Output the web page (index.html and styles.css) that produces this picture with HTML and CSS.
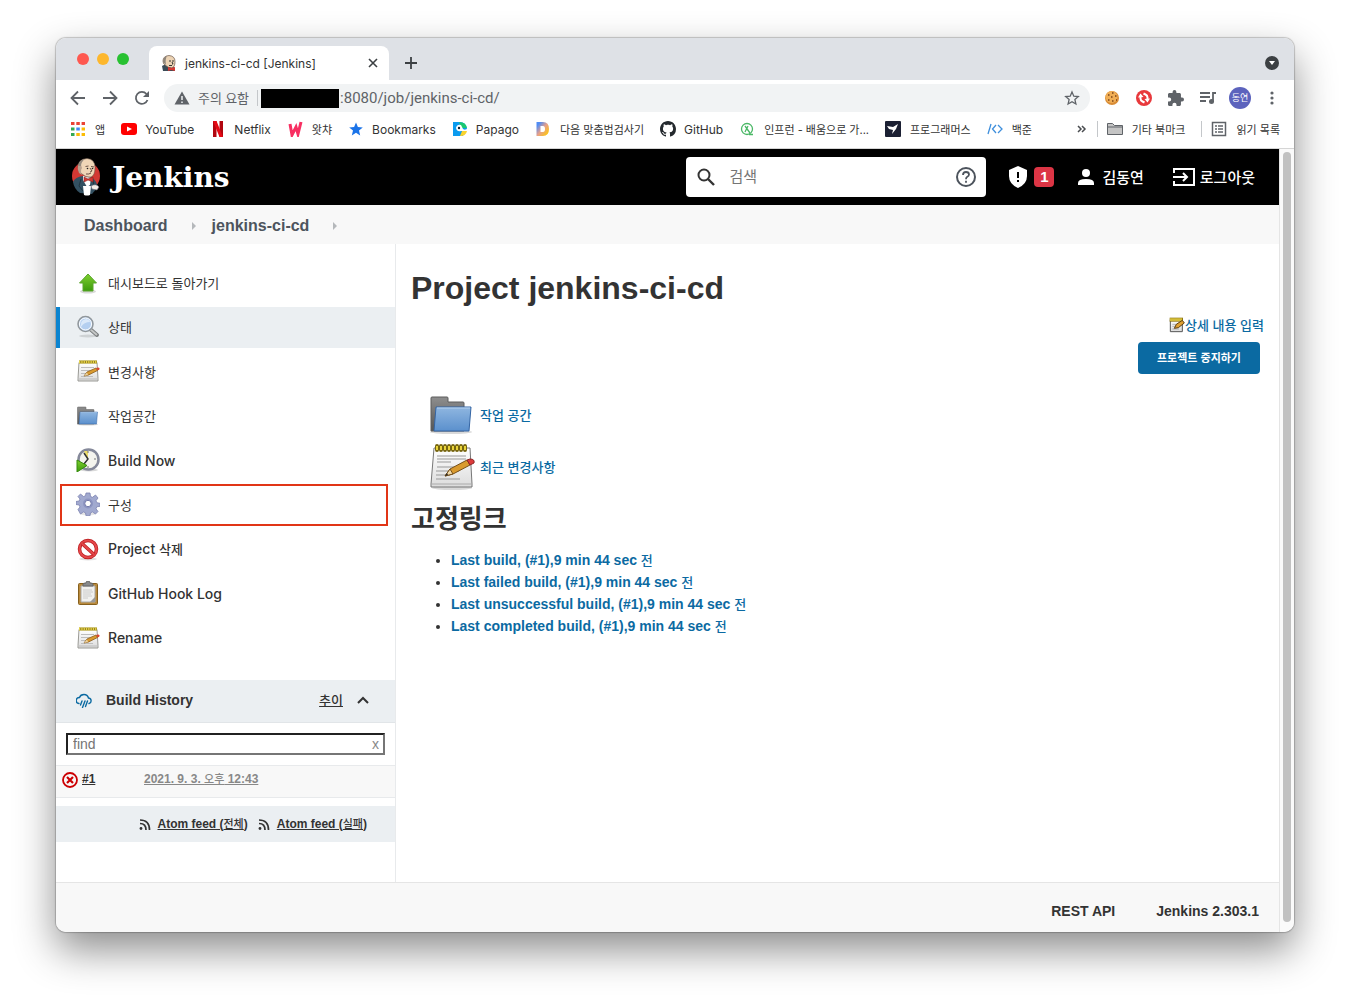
FILE: index.html
```html
<!DOCTYPE html>
<html lang="ko">

<head>
    <meta charset="UTF-8">
    <meta name="viewport" content="width=device-width, initial-scale=1.0">
    <title>jenkins-ci-cd [Jenkins]</title>
    <link rel="stylesheet" href="styles.css">
</head>

<body>

    <!-- shared icons -->
    <svg class="sprite" aria-hidden="true">
        <defs>
            <linearGradient id="blue-folder" x1="0" y1="0" x2="0" y2="1">
                <stop offset="0" stop-color="#8fb6e0" />
                <stop offset="1" stop-color="#5b90cd" />
            </linearGradient>
            <linearGradient id="gray-folder" x1="0" y1="0" x2="0" y2="1">
                <stop offset="0" stop-color="#8e8e8e" />
                <stop offset="1" stop-color="#555" />
            </linearGradient>
            <linearGradient id="paper" x1="0" y1="0" x2="0" y2="1">
                <stop offset="0" stop-color="#fff" />
                <stop offset="1" stop-color="#dcdcdc" />
            </linearGradient>
            <linearGradient id="green" x1="0" y1="0" x2="0" y2="1">
                <stop offset="0" stop-color="#7fd030" />
                <stop offset="1" stop-color="#3c9a0c" />
            </linearGradient>
            <linearGradient id="daum" x1="0" y1="0" x2="1" y2="1">
                <stop offset="0" stop-color="#4f8cf5" />
                <stop offset="0.5" stop-color="#e8a08a" />
                <stop offset="1" stop-color="#fbc21b" />
            </linearGradient>
        </defs>
        <symbol id="notepad" viewBox="0 0 48 48">
            <ellipse cx="24" cy="45" rx="20" ry="2" fill="#000" opacity=".15" />
            <path d="M6 5h36l2 36v3H3v-3z" fill="url(#paper)" stroke="#777" />
            <path d="M4 41h39" stroke="#aaa" />
            <path d="M9 13h29M9 16h29M9 19h14M9 24h26M8 28h23M8 32h14M8 36h24" stroke="#999" />
            <path d="M9 3v4M13 3v4M17 3v4M21 3v4M25 3v4M29 3v4M33 3v4M37 3v4" stroke="#76650f" stroke-width="4" stroke-linecap="round" />
            <path d="M9 3v4M13 3v4M17 3v4M21 3v4M25 3v4M29 3v4M33 3v4M37 3v4" stroke="#ead43a" stroke-width="2" />
            <path d="M17 33l5-7 17-9 3 5-17 9z" fill="#d99a2e" stroke="#77501a" />
            <path d="M17 33l5-7 3 5z" fill="#f0d9a8" stroke="#77501a" />
            <path d="M17 33l2-3 1 2z" fill="#222" />
            <path d="M39 17l3-1q5 0 4 4l-4 2z" fill="#dc3b3b" stroke="#8d2424" />
        </symbol>
        <symbol id="notepad-small" viewBox="0 0 24 24">
            <path d="M3 3.500h18l1 16v2.500H2v-2.500z" fill="url(#paper)" stroke="#9a9a95" />
            <path d="M2 20h20" stroke="#bbb" />
            <path d="M5 8.500h13M5 11.500h9M5 14.500h5M5 17.500h12" stroke="#bdbdbd" />
            <path d="M3 3h18" stroke="#8f7c1c" stroke-width="3" />
            <path d="M3 3h18" stroke="#e6d34a" stroke-width="3" stroke-dasharray="1.300 1" />
            <path d="M8 17l3-4 9-4 1.500 2.500-9 4.500z" fill="#d99a2e" stroke="#8a5c1e" stroke-width=".8" />
            <path d="M8 17l3-3.500 1 2.500z" fill="#e9d3a6" />
            <path d="M20 9q3-1 3.500.5T21.500 11.500z" fill="#d9452f" />
        </symbol>
        <symbol id="folder" viewBox="0 0 48 48">
            <ellipse cx="23" cy="41" rx="21" ry="2" fill="#000" opacity=".15" />
            <path d="M3 40V7q0-1 1-1h15q1 0 1 1v4h15q1 0 1 1v28z" fill="url(#gray-folder)" stroke="#5c5c5c" />
            <path d="M8 16h35l-2 24H6z" fill="url(#blue-folder)" stroke="#3465a4" />
            <path d="M9 17h33" stroke="#b7d2ee" />
        </symbol>
        <symbol id="butler" viewBox="0 0 28 38">
            <circle cx="14" cy="18" r="14" fill="#d33833" />
            <path d="M1 24q2-5 10-6l10 2q4 4 5 9l-6 7-12-1q-6-4-7-11z" fill="#335061" />
            <path d="M9 21l-2 7 4 5M21 22l1 6" fill="none" stroke="#1c2f3a" stroke-width=".8" />
            <path d="M11 18l8 2-1 7-3 2-4-7z" fill="#fff" />
            <path d="M6 9q0-8 9-8.500 8 .5 8 9 0 8-4 9.500-5 1-9-3-4-2-4-7z" fill="#f0d6b7" stroke="#6b574b" stroke-width=".6" />
            <path d="M6 7q-1 4 1 8l3 2q-2-4 0-7l-1-3z" fill="#b8a290" />
            <path d="M6 8q1-6 7-7-4 3-4 7z" fill="#948b80" />
            <path d="M13.500 8.500l3-.5M19 8.500l3 .5M18 10l2 3-2 1M14 16q3 .5 5-1" fill="none" stroke="#49312b" stroke-width=".8" />
            <circle cx="15.500" cy="10.500" r=".8" fill="#222" />
            <circle cx="20.500" cy="10.500" r=".8" fill="#222" />
            <path d="M12 19l4 2 5-2v5l-5-2-4 2z" fill="#d33833" stroke="#8c2320" stroke-width=".6" />
            <path d="M11 28h8l-1 9q-3 1-6 0z" fill="#fff" />
            <path d="M19 28q5-3 8 1l-2 3-5-1z" fill="#f3efe9" stroke="#667" stroke-width=".6" />
        </symbol>
        <symbol id="rss" viewBox="0 0 12 12">
            <circle cx="2" cy="10.500" r="1.400" fill="#333" />
            <path d="M1 5.500q6 0 6 6.500M1 2q9.500 0 9.500 10" fill="none" stroke="#333" stroke-width="1.700" />
        </symbol>
    </svg>

    <div class="window">

        <!-- browser chrome -->
        <div class="tab-strip">
            <div class="lights">
                <span class="light red"></span>
                <span class="light yellow"></span>
                <span class="light green"></span>
            </div>
            <div class="tab">
                <svg class="favicon" viewBox="0 0 16 16"><path d="M1 11q3-2 5-1l6 1q2 2 2 5H2z" fill="#3a4b57" /><path d="M2 6q0-5 6-5.500 6 .5 6 6T11 13Q7 13 4 10 2 9 2 6z" fill="#ecd3b4" stroke="#6b574b" stroke-width=".7" /><path d="M2 7q0-5 4-6Q4 4 5 10z" fill="#8f867c" /><path d="M8 6h2M11 6h2M11 7l1 2h-1M8 10.500h3" fill="none" stroke="#333" /><path d="M7 12l3 1 4-1v4l-4-1-3 1z" fill="#d33833" /></svg>
                <span class="tab-title">jenkins-ci-cd [Jenkins]</span>
                <button class="plain" aria-label="탭 닫기">
                    <svg width="16" height="16" viewBox="0 0 16 16"><path d="M4 4l8 8M12 4l-8 8" stroke="#3c4043" stroke-width="1.6" /></svg>
                </button>
            </div>
            <button class="plain new-tab" aria-label="새 탭">
                <svg width="16" height="16" viewBox="0 0 16 16"><path d="M8 2v12M2 8h12" stroke="#3c4043" stroke-width="1.8" /></svg>
            </button>
            <button class="plain tab-search" aria-label="탭 검색">
                <svg width="14" height="14" viewBox="0 0 14 14"><circle cx="7" cy="7" r="7" fill="#3c4043" /><path d="M4 5h6L7 9z" fill="#fff" /></svg>
            </button>
        </div>

        <div class="toolbar">
            <button class="plain slot" aria-label="뒤로">
                <svg width="16" height="16" viewBox="0 0 16 16"><path d="M15 8H2M8 1.500L1.500 8 8 14.500" fill="none" stroke="#5f6368" stroke-width="1.8" /></svg>
            </button>
            <button class="plain slot" aria-label="앞으로">
                <svg width="16" height="16" viewBox="0 0 16 16"><path d="M1 8h13M8 1.500L14.500 8 8 14.500" fill="none" stroke="#5f6368" stroke-width="1.8" /></svg>
            </button>
            <button class="plain slot" aria-label="새로고침">
                <svg width="16" height="16" viewBox="0 0 16 16"><path d="M13.500 10A6 6 0 1 1 12.500 4" fill="none" stroke="#5f6368" stroke-width="1.8" /><path d="M15 1v6H9z" fill="#5f6368" /></svg>
            </button>
            <div class="omnibox">
                <svg width="16" height="16" viewBox="0 0 16 16"><path d="M8 1.500L15.500 14.500H.5z" fill="#5f6368" /><path d="M8 6v4M8 11.500v1.500" stroke="#f1f3f4" stroke-width="1.500" /></svg>
                <span class="warning">주의 요함</span>
                <span class="divider"></span>
                <span class="host"></span>
                <input class="url" type="text" value=":8080/job/jenkins-ci-cd/" aria-label="주소창">
                <svg width="16" height="16" viewBox="0 0 16 16"><path d="M8 2l1.800 4.200 4.500.4-3.400 3 1 4.400L8 11.700 4.100 14l1-4.400-3.400-3 4.500-.4z" fill="none" stroke="#5f6368" stroke-width="1.300" /></svg>
            </div>
            <button class="plain slot" aria-label="쿠키">
                <svg width="16" height="16" viewBox="0 0 16 16"><circle cx="8" cy="8" r="7" fill="#d98c35" /><circle cx="7.500" cy="7" r="6" fill="#f0ae55" /><path d="M4 5h1.500M8 3h1.500M7 7h1.500M11 6h1.500M4 10h1.500M8 11h1.500M12 10h1" stroke="#7a4319" stroke-width="1.500" /></svg>
            </button>
            <button class="plain slot" aria-label="확장 프로그램">
                <svg width="16" height="16" viewBox="0 0 16 16"><circle cx="8" cy="8" r="8" fill="#e8393c" /><path d="M4.500 6v2.500q0 2 2 3l2 1M11.500 10V7.500q0-2-2-3l-2-1" fill="none" stroke="#fff" stroke-width="2" /><path d="M2 7.500l2.500-4 3 3.500zM14 8.500l-2.500 4-3-3.500z" fill="#fff" /></svg>
            </button>
            <button class="plain slot" aria-label="확장 프로그램 관리">
                <svg width="16" height="16" viewBox="2 1 21 21"><path d="M20.500 11H19V7c0-1.100-.9-2-2-2h-4V3.500a2.500 2.500 0 0 0-5 0V5H4c-1.100 0-2 .9-2 2v3.800h1.500a2.700 2.700 0 0 1 0 5.400H2V20c0 1.100.9 2 2 2h3.800v-1.500a2.700 2.700 0 0 1 5.400 0V22H17c1.100 0 2-.9 2-2v-4h1.500a2.500 2.500 0 0 0 0-5z" fill="#5f6368" /></svg>
            </button>
            <button class="plain slot" aria-label="미디어">
                <svg width="18" height="16" viewBox="0 0 18 16"><path d="M1 3h10M1 7h10M1 11h6M14 12V3h3" fill="none" stroke="#5f6368" stroke-width="1.800" /><circle cx="12.500" cy="11.500" r="2.500" fill="#5f6368" /></svg>
            </button>
            <button class="plain slot"><span class="avatar">동연</span></button>
            <button class="plain slot" aria-label="메뉴">
                <svg width="16" height="16" viewBox="0 0 16 16" fill="#5f6368"><circle cx="8" cy="3" r="1.600" /><circle cx="8" cy="8" r="1.600" /><circle cx="8" cy="13" r="1.600" /></svg>
            </button>
        </div>

        <nav class="bookmarks">
            <a href="#" class="ko">
                <svg viewBox="0 0 16 16"><path d="M1 2.500h14" stroke="#ea4335" stroke-width="3" stroke-dasharray="3.500 1.800" /><path d="M1 8h3.500" stroke="#34a853" stroke-width="3" /><path d="M6.300 8h3.500" stroke="#4285f4" stroke-width="3" /><path d="M11.600 8H15" stroke="#fbbc05" stroke-width="3" /><path d="M1 13.500h3.500" stroke="#34a853" stroke-width="3" /><path d="M6.300 13.500H15" stroke="#fbbc05" stroke-width="3" stroke-dasharray="3.500 1.800" /></svg>
                앱</a>
            <a href="#">
                <svg viewBox="0 0 16 16"><rect y="2" width="16" height="12" rx="3" fill="#f00" /><path d="M6 5.500v5L11 8z" fill="#fff" /></svg>
                YouTube</a>
            <a href="#">
                <svg viewBox="0 0 16 16"><path d="M3 0h3.500v16H3zM9.500 0H13v16H9.500z" fill="#b1060f" /><path d="M3 0h3.500L13 16H9.500z" fill="#e50914" /></svg>
                Netflix</a>
            <a href="#" class="ko">
                <svg viewBox="0 0 16 16"><path d="M3 3l2 11 4-8 2 7 3-12" fill="none" stroke="#f82f62" stroke-width="3" /></svg>
                왓챠</a>
            <a href="#">
                <svg viewBox="0 0 16 16"><path d="M8 1.500l1.900 4.600 4.900.3-3.800 3.200 1.200 4.900L8 11.800l-4.200 2.700L5 9.600 1.200 6.400l4.900-.3z" fill="#1a73e8" /></svg>
                Bookmarks</a>
            <a href="#">
                <svg viewBox="0 0 16 16"><path d="M1 1h7q6 0 7 7l-3 1-1 6H1z" fill="#0b9bef" /><path d="M7 1q7 0 8 6H9z" fill="#1bc870" /><path d="M4 7q1-4 5-3l2 4 4 2H9q-4 1-5-3z" fill="#fff" /><circle cx="7" cy="7" r="1.200" fill="#123" /><path d="M15 10a6 6 0 0 1-7 5l2-5z" fill="#f8d32e" /></svg>
                Papago</a>
            <a href="#" class="ko">
                <svg viewBox="0 0 16 16"><path d="M3.500 3H8q4 0 4 5t-4 5H3.500z" fill="none" stroke="url(#daum)" stroke-width="4" /></svg>
                다음 맞춤법검사기</a>
            <a href="#">
                <svg viewBox="0 0 16 16"><path d="M8 0C3.580 0 0 3.580 0 8c0 3.540 2.290 6.530 5.470 7.590.4.070.55-.17.55-.38 0-.19-.01-.82-.01-1.490-2.010.37-2.530-.49-2.690-.94-.09-.23-.48-.94-.82-1.130-.28-.15-.68-.52-.01-.53.63-.01 1.080.58 1.230.82.72 1.210 1.870.87 2.330.66.07-.52.28-.87.51-1.070-1.780-.2-3.640-.89-3.640-3.950 0-.87.31-1.590.82-2.150-.08-.2-.36-1.020.08-2.120 0 0 .67-.21 2.200.82.64-.18 1.320-.27 2-.27s1.360.09 2 .27c1.530-1.040 2.200-.82 2.200-.82.44 1.100.16 1.920.08 2.120.51.56.82 1.270.82 2.150 0 3.070-1.870 3.750-3.650 3.950.29.25.54.73.54 1.480 0 1.070-.01 1.930-.01 2.200 0 .21.15.46.55.38A8 8 0 0 0 16 8c0-4.420-3.580-8-8-8z" fill="#24292e" /></svg>
                GitHub</a>
            <a href="#" class="ko">
                <svg viewBox="0 0 16 16"><circle cx="8" cy="8" r="5.500" fill="none" stroke="#4ab866" stroke-width="1.300" /><path d="M6 5l5 7M9 5l-3 6M10 13.500h4" fill="none" stroke="#4ab866" stroke-width="1.300" /></svg>
                인프런 - 배움으로 가...</a>
            <a href="#" class="ko">
                <svg viewBox="0 0 16 16"><rect width="16" height="16" rx="1" fill="#1b2033" /><path d="M2 5l6 1 5-3-2 5-4 5 1-4-4-1z" fill="#fff" /></svg>
                프로그래머스</a>
            <a href="#" class="ko">
                <svg viewBox="0 0 16 16"><path d="M1 13L4 3M9 4L5.500 8 9 12M11 4l4 4-4 4" fill="none" stroke="#3f8fdc" stroke-width="1.300" /></svg>
                백준</a>
            <a href="#" class="more" aria-label="더보기">
                <svg viewBox="0 0 16 16"><path d="M4 5l3 3-3 3M8 5l3 3-3 3" fill="none" stroke="#4a4d51" stroke-width="1.500" /></svg></a>
            <span class="divider"></span>
            <a href="#" class="ko">
                <svg viewBox="0 0 16 16"><path d="M.5 13.500v-11h5l2 2h8v9z" fill="#c4c4c4" stroke="#5f6368" /><path d="M1 6h14" stroke="#5f6368" /></svg>
                기타 북마크</a>
            <span class="divider"></span>
            <a href="#" class="ko">
                <svg viewBox="0 0 16 16"><path d="M1.500 1.500h13v13h-13z" fill="none" stroke="#5f6368" stroke-width="1.500" /><path d="M4 5h2M7 5h5M4 8h2M7 8h5M4 11h2M7 11h5" stroke="#5f6368" stroke-width="1.500" /></svg>
                읽기 목록</a>
        </nav>

        <div class="viewport">
            <div class="page">

                <header class="header">
                    <a href="#" class="logo">
                        <svg width="28" height="38"><use href="#butler" /></svg>
                        Jenkins
                    </a>
                    <div class="search">
                        <svg width="20" height="20" viewBox="0 0 20 20"><circle cx="8" cy="8" r="5.500" fill="none" stroke="#333" stroke-width="2" /><path d="M12 12l6 6" stroke="#333" stroke-width="2.400" /></svg>
                        <input type="text" placeholder="검색" aria-label="검색">
                        <a href="#" aria-label="도움말">
                            <svg width="20" height="20" viewBox="0 0 20 20"><circle cx="10" cy="10" r="9" fill="none" stroke="#4d545d" stroke-width="2" /><path d="M7 8q0-3 3-3t3 2.500q0 1.500-2 2.500-1 .6-1 2.300M10 13.800v2" fill="none" stroke="#4d545d" stroke-width="1.800" /></svg>
                        </a>
                    </div>
                    <a href="#" class="alerts">
                        <svg width="20" height="22" viewBox="0 0 20 22"><path d="M10 0l9 4v6q0 8-9 12Q1 18 1 10V4z" fill="#fff" /><path d="M10 6v6M10 14v2" stroke="#000" stroke-width="2" /></svg>
                        <span class="badge">1</span>
                    </a>
                    <a href="#" class="user">
                        <svg width="16" height="16" viewBox="0 0 16 16"><circle cx="8" cy="4" r="4" fill="#fff" /><path d="M0 16v-2q0-4 8-4t8 4v2z" fill="#fff" /></svg>
                        <span>김동연</span>
                    </a>
                    <a href="#" class="logout">
                        <svg width="22" height="18" viewBox="0 0 22 18"><path d="M1 5V1h20v16H1v-4M0 9h13M10 5l4 4-4 4" fill="none" stroke="#fff" stroke-width="2" /></svg>
                        <span>로그아웃</span>
                    </a>
                </header>

                <nav class="breadcrumbs">
                    <a href="#">Dashboard</a>
                    <span class="crumb-arrow"></span>
                    <a href="#">jenkins-ci-cd</a>
                    <span class="crumb-arrow"></span>
                </nav>

                <div class="content">
                    <aside class="side-panel">
                        <nav class="tasks">
                            <a href="#" class="task ko">
                                <svg viewBox="0 0 24 24"><ellipse cx="12" cy="20.500" rx="8" ry="2" fill="#000" opacity=".15" /><path d="M12 3l8.500 9H17v8H7v-8H3.500z" fill="url(#green)" stroke="#5aa62c" /></svg>
                                대시보드로 돌아가기
                            </a>
                            <a href="#" class="task ko active">
                                <svg viewBox="0 0 24 24"><ellipse cx="12" cy="21" rx="9" ry="1.500" fill="#000" opacity=".12" /><path d="M14 14l7 6" stroke="#7c7f80" stroke-width="4" stroke-linecap="round" /><path d="M14 14l7 6" stroke="#c5c7c6" stroke-width="2" /><circle cx="9.500" cy="9" r="7.500" fill="#b4cff0" stroke="#91979b" stroke-width="1.500" /><circle cx="9.500" cy="9" r="6" fill="none" stroke="#fff" /><path d="M5 9q0-4 5-5 4 1 4 3-6 0-9 5z" fill="#dbe9f9" /></svg>
                                상태
                            </a>
                            <a href="#" class="task ko">
                                <svg><use href="#notepad-small" /></svg>
                                변경사항
                            </a>
                            <a href="#" class="task ko">
                                <svg><use href="#folder" /></svg>
                                작업공간
                            </a>
                            <a href="#" class="task">
                                <svg viewBox="0 0 24 24"><ellipse cx="13" cy="22" rx="9" ry="1.500" fill="#000" opacity=".15" /><circle cx="12.500" cy="11.500" r="10" fill="#f4f4ee" stroke="#85899a" stroke-width="2.500" /><path d="M12 11L8 3h4z" fill="#eddc68" /><path d="M8 5l4 6-4 5" fill="none" stroke="#333" stroke-width="1.500" /><path d="M12 3v2M20 11h-2M12 20v-2" stroke="#777" /><path d="M1 12l10 5.500-10 6.500z" fill="url(#green)" stroke="#348c0c" /></svg>
                                Build Now
                            </a>
                            <a href="#" class="task ko marked">
                                <svg viewBox="0 0 24 24"><ellipse cx="12" cy="22" rx="8" ry="1.500" fill="#000" opacity=".1" /><path d="M10 1h4l.5 3.500 2 .8L19.500 3 22 6l-2 2.700.8 2 3.200.6v3l-3.200.5-.8 2 2 2.700-2.500 2.500-3-2-2 .8-.5 3h-4l-.5-3-2-.8-3 2L2 17.500 4 15l-.8-2L0 12.500v-3L3.200 9 4 7 2 4.500 4.500 2l3 2.500 2-.8z" fill="#a1a9cf" stroke="#7b82b0" stroke-width=".8" /><circle cx="12" cy="11.500" r="5" fill="#8d95c2" /><circle cx="12" cy="11.500" r="3.200" fill="#fff" stroke="#747bab" /></svg>
                                구성
                            </a>
                            <a href="#" class="task">
                                <svg viewBox="0 0 24 24"><ellipse cx="12" cy="22" rx="9" ry="1.500" fill="#000" opacity=".12" /><circle cx="12" cy="12" r="8.500" fill="#fff" stroke="#b9191c" stroke-width="3.500" /><circle cx="12" cy="12" r="8.500" fill="none" stroke="#e4474a" stroke-width="2.200" /><path d="M6 6.500l12 11" stroke="#b9191c" stroke-width="3.500" /><path d="M6 6.500l12 11" stroke="#e4474a" stroke-width="2.200" /></svg>
                                <span>Project <span class="ko">삭제</span></span>
                            </a>
                            <a href="#" class="task">
                                <svg viewBox="0 0 24 24"><rect x="2.500" y="2.500" width="19" height="21" rx="1" fill="#b98a3c" stroke="#86601e" /><path d="M5 5h14v16H5z" fill="#f1f1ef" stroke="#aaa" /><path d="M7 9h9M7 11h10M7 13h8M7 15h9M7 17h5" stroke="#ccc" /><path d="M19 16l-5 5h5z" fill="#999" /><path d="M7 5V3q0-1 3-1 0-2 2-2t2 2q3 0 3 1v2z" fill="#888a8c" stroke="#666" /></svg>
                                GitHub Hook Log
                            </a>
                            <a href="#" class="task">
                                <svg><use href="#notepad-small" /></svg>
                                Rename
                            </a>
                        </nav>

                        <section class="history">
                            <div class="history-head">
                                <svg width="16" height="16" viewBox="0 0 16 16"><path d="M3 11.500a3 3 0 0 1 .5-6Q4.500 2.500 8 2.500q3.500 0 4.500 3.500a2.800 2.800 0 0 1 .5 5.500M6 9l-1.500 4M9 9l-2.500 6.500M11.500 9l-2 5.500" fill="none" stroke="#0b6aa2" stroke-width="1.400" stroke-linecap="round" /></svg>
                                <h2>Build History</h2>
                                <a href="#" class="ko">추이</a>
                                <button class="plain" aria-label="접기">
                                    <svg width="12" height="8" viewBox="0 0 12 8"><path d="M1 7l5-5 5 5" fill="none" stroke="#333" stroke-width="2" /></svg>
                                </button>
                            </div>
                            <div class="find">
                                <input type="text" placeholder="find" aria-label="find">
                                <button class="plain">x</button>
                            </div>
                            <div class="build">
                                <svg width="16" height="16" viewBox="0 0 16 16"><circle cx="8" cy="8" r="7" fill="none" stroke="#cc0003" stroke-width="1.800" /><path d="M5 5l6 6M11 5l-6 6" stroke="#cc0003" stroke-width="2.200" /></svg>
                                <a href="#" class="build-number">#1</a>
                                <a href="#" class="build-date">2021. 9. 3. <span>오후</span> 12:43</a>
                            </div>
                            <div class="feeds">
                                <svg width="12" height="12"><use href="#rss" /></svg>
                                <a href="#">Atom feed (<span>전체</span>)</a>
                                <svg width="12" height="12"><use href="#rss" /></svg>
                                <a href="#">Atom feed (<span>실패</span>)</a>
                            </div>
                        </section>
                    </aside>

                    <main class="main-panel">
                        <h1>Project jenkins-ci-cd</h1>
                        <div class="actions">
                            <a href="#" class="describe ko">
                                <svg width="16" height="16" viewBox="0 0 24 24"><path d="M2 4h18v18H2z" fill="url(#paper)" stroke="#555" stroke-width="1.500" /><path d="M5 11h8M5 14h5M5 18h10" stroke="#999" /><path d="M1 4h20" stroke="#8f7613" stroke-width="6" /><path d="M2 4h18" stroke="#f4e04d" stroke-width="4" stroke-dasharray="2 1" /><path d="M8 17l3-6 9-6 3 4-9 7z" fill="#e0a032" stroke="#5e3f12" stroke-width="1.500" /></svg>상세 내용 입력</a>
                            <button class="primary">프로젝트 중지하기</button>
                        </div>
                        <div class="shortcuts">
                            <a href="#" class="ko"><svg width="48" height="48"><use href="#folder" /></svg>작업 공간</a>
                            <a href="#" class="ko"><svg width="48" height="48"><use href="#notepad" /></svg>최근 변경사항</a>
                        </div>
                        <h2>고정링크</h2>
                        <ul class="permalinks">
                            <li><a href="#">Last build, (#1),9 min 44 sec <span class="ko">전</span></a></li>
                            <li><a href="#">Last failed build, (#1),9 min 44 sec <span class="ko">전</span></a></li>
                            <li><a href="#">Last unsuccessful build, (#1),9 min 44 sec <span class="ko">전</span></a></li>
                            <li><a href="#">Last completed build, (#1),9 min 44 sec <span class="ko">전</span></a></li>
                        </ul>
                    </main>
                </div>

                <footer class="footer">
                    <a href="#">REST API</a>
                    <a href="#">Jenkins 2.303.1</a>
                </footer>
            </div>
            <div class="scrollbar"><div class="thumb"></div></div>
        </div>
    </div>

</body>

</html>
```
FILE: styles.css
```css
* {
    box-sizing: border-box;
}

body {
    margin: 0;
    padding: 38px 56px 74px;
    min-height: 100vh;
    display: flex;
    background: #fff;
    color: #333;
    font-family: "Liberation Sans", "Noto Sans CJK KR", sans-serif;
    font-size: 14px;
}

a {
    color: inherit;
    text-decoration: none;
}

svg {
    flex: none;
    display: block;
}

.sprite {
    position: absolute;
    width: 0;
    height: 0;
}

.plain {
    display: flex;
    align-items: center;
    justify-content: center;
    padding: 0;
    border: 0;
    background: none;
    font: inherit;
    color: inherit;
}

.window {
    flex: 1;
    min-width: 0;
    display: flex;
    flex-direction: column;
    border-radius: 10px;
    overflow: hidden;
    background: #fff;
    box-shadow: 0 0 1px 1px rgba(0, 0, 0, 0.2), 0 18px 40px rgba(0, 0, 0, 0.45);
}

/* Tabs */
.tab-strip {
    display: flex;
    height: 42px;
    padding: 8px 15px 0 21px;
    background: #dee1e6;
    font-family: Inter, "Noto Sans CJK KR", sans-serif;
    font-size: 12px;
}

.lights {
    display: flex;
    gap: 8px;
    padding-top: 7px;
}

.light {
    width: 12px;
    height: 12px;
    border-radius: 50%;
}

.light.red {
    background: #fe5850;
}

.light.yellow {
    background: #fdb72d;
}

.light.green {
    background: #28c131;
}

.tab {
    display: flex;
    align-items: center;
    width: 240px;
    margin-left: 20px;
    padding: 0 8px 0 12px;
    border-radius: 8px 8px 0 0;
    background: #fff;
}

.favicon {
    width: 16px;
    height: 16px;
    margin-right: 8px;
}

.tab-title {
    flex: 1;
}

.new-tab {
    margin-left: 14px;
}

.tab-search {
    margin-left: auto;
}

/* Address bar */
.toolbar {
    display: flex;
    align-items: center;
    height: 36px;
    padding: 0 6px;
    font-family: Roboto, "Noto Sans CJK KR", sans-serif;
}

.slot {
    width: 32px;
    height: 32px;
}

.omnibox {
    flex: 1;
    display: flex;
    align-items: center;
    height: 28px;
    margin: 0 6px;
    padding: 0 10px;
    border-radius: 14px;
    background: #f1f3f4;
    color: #5f6368;
}

.warning {
    margin-left: 8px;
    padding-bottom: 2px;
    font-size: 13px;
}

.divider {
    width: 1px;
    height: 16px;
    background: #c4c7ca;
}

.omnibox .divider {
    margin: 0 3px 0 8px;
}

.host {
    width: 78px;
    height: 19px;
    background: #000;
}

.url {
    flex: 1;
    padding: 0 0 0 1px;
    border: 0;
    background: none;
    color: #5f6368;
    font-family: Roboto, sans-serif;
    font-size: 15px;
}

.avatar {
    width: 22px;
    height: 22px;
    border-radius: 50%;
    background: #5c63bd;
    color: #fff;
    font-size: 9px;
    line-height: 22px;
}

/* Bookmarks */
.bookmarks {
    display: flex;
    align-items: center;
    gap: 16px;
    height: 33px;
    padding: 0 14px 6px;
    border-bottom: 1px solid #d5d5d5;
    font-family: Inter, "Noto Sans CJK KR", sans-serif;
    font-size: 12px;
    white-space: nowrap;
}

.bookmarks a {
    display: flex;
    align-items: center;
    gap: 8px;
}

.bookmarks svg {
    width: 16px;
    height: 16px;
}

.bookmarks .ko {
    font-size: 11px;
    gap: 9px;
}

.bookmarks .more {
    margin-left: auto;
    margin-right: -9px;
}

.bookmarks .divider {
    margin-right: -7px;
}

/* Jenkins page */
.viewport {
    flex: 1;
    display: flex;
}

.page {
    flex: 1;
    min-width: 0;
    display: flex;
    flex-direction: column;
}

.scrollbar {
    width: 15px;
    padding: 3px 3px 10px;
    border-left: 1px solid #e5e5e5;
    background: #fafafa;
}

.thumb {
    width: 8px;
    height: 100%;
    border-radius: 4px;
    background: #c1c1c1;
}

.header {
    display: flex;
    align-items: center;
    height: 56px;
    padding: 0 24px 0 16px;
    background: #000;
    color: #fff;
    font-size: 15px;
    font-weight: bold;
}

.header a {
    display: flex;
    align-items: center;
}

.header .logo {
    gap: 12px;
    font-family: "DejaVu Serif", serif;
    font-size: 28px;
}

.search {
    display: flex;
    align-items: center;
    width: 300px;
    height: 40px;
    margin-left: auto;
    padding: 0 10px;
    border-radius: 4px;
    background: #fff;
}

.search input {
    flex: 1;
    min-width: 0;
    padding: 0 13px 3px;
    border: 0;
    background: none;
    font-family: "Noto Sans CJK KR", sans-serif;
    font-size: 15px;
}

.header .alerts {
    gap: 6px;
    margin-left: 22px;
}

.badge {
    width: 20px;
    height: 20px;
    border-radius: 4px;
    background: #dc3545;
    line-height: 20px;
    text-align: center;
}

.header .user {
    gap: 8px;
    margin-left: 24px;
}

.header .logout {
    gap: 5px;
    margin-left: 29px;
}

.user span,
.logout span {
    padding-bottom: 2px;
    font-weight: 500;
}

.breadcrumbs {
    display: flex;
    align-items: center;
    height: 39px;
    padding: 2px 28px 0;
    background: #f8f8f8;
    color: #4d545d;
    font-size: 16px;
    font-weight: bold;
}

.crumb-arrow {
    margin: 0 16px 0 24px;
    border: 4px solid transparent;
    border-left-color: #b5b8bb;
    border-right: 0;
}

.content {
    flex: 1;
    display: flex;
}

.ko {
    font-size: 13px;
}

/* Side panel */
.side-panel {
    width: 340px;
    padding-top: 19px;
    border-right: 1px solid #e8eaec;
}

.tasks {
    display: flex;
    flex-direction: column;
    justify-content: space-between;
    height: 396px;
}

.task {
    display: flex;
    align-items: center;
    gap: 8px;
    height: 41px;
    padding: 0 0 2px 16px;
    border-left: 4px solid transparent;
    font-family: Inter, "Noto Sans CJK KR", sans-serif;
    font-weight: 500;
}

.task.ko {
    font-weight: normal;
}

.task svg {
    width: 24px;
    height: 24px;
}

.task.active {
    border-left-color: #0b84d0;
    background: #ebeff2;
}

.task.marked {
    position: relative;
}

.task.marked::after {
    content: "";
    position: absolute;
    inset: -1px 7px 0 0;
    border: 2px solid #e13517;
}

.history {
    margin-top: 21px;
    font-weight: bold;
}

.history-head {
    display: flex;
    align-items: center;
    height: 43px;
    padding: 0 26px 2px 20px;
    border-bottom: 1px solid #e1e5e8;
    background: #ebeff2;
}

.history-head h2 {
    flex: 1;
    margin: 0 0 0 14px;
    font-size: 14px;
}

.history a {
    text-decoration: underline;
}

.history-head .ko {
    padding-bottom: 2px;
    font-weight: 500;
}

.history-head button {
    margin-left: 14px;
}

.find {
    position: relative;
    padding: 10px;
}

.find input {
    display: block;
    width: 100%;
    height: 22px;
    padding: 0 20px 0 5px;
    border: 2px inset #767676;
    font-family: "Liberation Sans", sans-serif;
    font-size: 14px;
}

.find button {
    position: absolute;
    top: 12px;
    right: 16px;
    height: 18px;
    color: #888;
    font-weight: normal;
}

.build {
    display: flex;
    height: 33px;
    padding: 6px 6px 0;
    border-top: 1px solid #e8eaec;
    border-bottom: 1px solid #e8eaec;
    background: #f8f8f8;
    font-size: 12px;
    line-height: 14px;
}

.build-number {
    width: 66px;
    padding-left: 4px;
}

.build-date {
    color: #888;
}

.history a span {
    font-size: 11px;
    font-weight: 500;
    line-height: 1;
}

.feeds {
    display: flex;
    align-items: center;
    justify-content: flex-end;
    gap: 7px;
    height: 36px;
    margin-top: 8px;
    padding: 0 28px 1px 0;
    background: #ebeff2;
    font-size: 12px;
}

.feeds a + svg {
    margin-left: 3px;
}

/* Main panel */
.main-panel {
    flex: 1;
    padding: 24px 15px 0;
}

h1 {
    margin: 0;
    font-size: 32px;
    line-height: 40px;
}

.main-panel h2 {
    margin: 12px 0 14px;
    font-size: 26px;
    line-height: 32px;
}

.main-panel a {
    color: #0b6aa2;
    font-weight: bold;
}

.main-panel .ko {
    font-weight: 500;
    line-height: 1;
}

.actions {
    display: flex;
    flex-direction: column;
    align-items: flex-end;
    gap: 7px;
    margin-top: 7px;
}

.describe {
    display: flex;
    align-items: center;
    height: 20px;
}

.primary {
    height: 32px;
    margin-right: 4px;
    padding: 0 19px 2px;
    border: 0;
    border-radius: 4px;
    background: #0b6aa2;
    color: #fff;
    font-family: "Noto Sans CJK KR", sans-serif;
    font-size: 11px;
    font-weight: bold;
}

.shortcuts {
    display: flex;
    flex-direction: column;
    align-items: flex-start;
    gap: 4px;
    padding: 17px 0 0 17px;
}

.shortcuts a {
    display: flex;
    align-items: center;
    gap: 4px;
}

.permalinks {
    margin: 0;
    padding-left: 40px;
    line-height: 22px;
}

.footer {
    display: flex;
    align-items: center;
    justify-content: flex-end;
    gap: 41px;
    height: 50px;
    padding: 7px 20px 0;
    border-top: 1px solid #e5e5e5;
    background: #f8f8f8;
    font-weight: bold;
}
```
